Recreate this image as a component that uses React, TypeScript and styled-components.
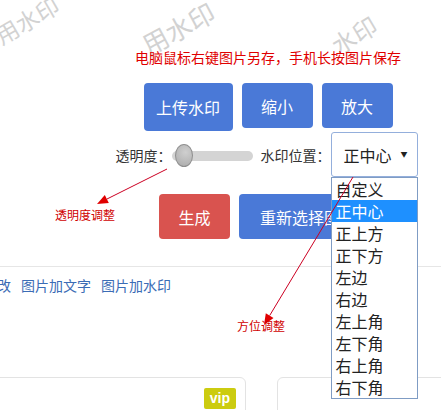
import React from 'react';
import styled, { createGlobalStyle } from 'styled-components';

const GlobalStyle = createGlobalStyle`
  html, body {
    margin: 0;
    padding: 0;
    background: #fff;
  }
  body {
    font-family: "Noto Sans CJK SC", "Noto Sans", sans-serif;
  }
`;

const Page = styled.div`
  position: relative;
  width: 441px;
  height: 410px;
  overflow: hidden;
  background: #fff;
`;

const Watermark = styled.span<{ $x: number; $y: number; $angle: number; $size: number }>`
  position: absolute;
  left: ${(p) => p.$x}px;
  top: ${(p) => p.$y}px;
  transform: translate(-50%, -50%) rotate(${(p) => p.$angle}deg);
  font-size: ${(p) => p.$size}px;
  font-weight: 400;
  color: #d2d2d2;
  white-space: nowrap;
  line-height: 1;
  user-select: none;
`;

const Tool = styled.div`
  position: relative;
  display: flex;
  flex-direction: column;
  align-items: center;
  padding: 49px 0 0 95px;
`;

const Tip = styled.p`
  margin: 0;
  font-size: 14px;
  line-height: 16px;
  color: #e00000;
  white-space: nowrap;
`;

const ButtonRow = styled.div<{ $top: number }>`
  display: flex;
  align-items: flex-start;
  gap: 9px;
  margin-top: ${(p) => p.$top}px;
`;

const Button = styled.button<{ $w: number; $h?: number; $danger?: boolean }>`
  width: ${(p) => p.$w}px;
  height: ${(p) => p.$h ?? 45}px;
  border: none;
  border-radius: 4px;
  background: ${(p) => (p.$danger ? '#d9534f' : '#4a79d7')};
  color: #fff;
  font-family: inherit;
  font-size: 16px;
  padding: 0;
  white-space: nowrap;
  cursor: pointer;
`;

const SettingRow = styled.div`
  display: flex;
  align-items: center;
  margin-top: 1px;
  margin-left: -3px;
`;

const Label = styled.span<{ $gap?: number }>`
  font-size: 14px;
  color: #333;
  white-space: nowrap;
  margin-left: ${(p) => p.$gap ?? 0}px;
`;

const Track = styled.div`
  position: relative;
  width: 81px;
  height: 10px;
  border-radius: 5px;
  background: #d4d4d4;
  margin-top: 2px;
`;

const Thumb = styled.div`
  position: absolute;
  left: 3px;
  top: -7px;
  width: 18px;
  height: 23px;
  border-radius: 50%;
  background: radial-gradient(circle at 60% 35%, #cfcfcf, #a9a9a9);
  border: 1px solid #8f8f8f;
  box-sizing: border-box;
`;

const SelectWrap = styled.div`
  position: relative;
`;

const SelectBox = styled.div`
  box-sizing: border-box;
  width: 87px;
  height: 45px;
  border: 1px solid #94afdc;
  border-radius: 3px;
  display: flex;
  align-items: center;
  justify-content: space-between;
  padding: 0 9px 0 12px;
  font-size: 16px;
  color: #222;
`;

const Caret = styled.span`
  font-size: 7px;
  color: #222;
  margin-top: -2px;
`;

const OptionList = styled.ul`
  position: absolute;
  top: 100%;
  left: 0;
  box-sizing: border-box;
  width: 87px;
  margin: 0;
  padding: 0;
  list-style: none;
  background: #fff;
  border: 1px solid #7f9cc4;
  z-index: 2;
`;

const Option = styled.li<{ $active?: boolean }>`
  height: 22px;
  line-height: 22px;
  padding-left: 4px;
  font-size: 16px;
  color: ${(p) => (p.$active ? '#fff' : '#222')};
  background: ${(p) => (p.$active ? '#1e90ff' : 'transparent')};
`;

const Divider = styled.div`
  height: 1px;
  background: #e6e6e6;
  margin-top: 27px;
`;

const Links = styled.nav`
  display: flex;
  gap: 10px;
  margin: 8px 0 0 -3px;
`;

const NavLink = styled.a`
  font-size: 14px;
  line-height: 20px;
  color: #3b6cb5;
  text-decoration: none;
  white-space: nowrap;
`;

const Cards = styled.div`
  display: flex;
  gap: 31px;
  margin: 82px 0 0 -20px;
`;

const Card = styled.div<{ $w: number }>`
  flex: none;
  box-sizing: border-box;
  width: ${(p) => p.$w}px;
  height: 60px;
  border: 1px solid #e3e3e3;
  border-radius: 6px;
  display: flex;
  justify-content: flex-end;
  align-items: flex-start;
  padding: 10px 9px;
`;

const Vip = styled.span`
  background: #cccc10;
  color: #fff;
  font-family: "Liberation Sans", Arial, sans-serif;
  font-weight: bold;
  font-size: 14px;
  line-height: 21px;
  padding: 0 6px;
  border-radius: 2px;
`;

const Annotations = styled.svg`
  position: absolute;
  left: 0;
  top: 0;
  pointer-events: none;
  z-index: 3;
`;

const Note = styled.span<{ $x: number; $y: number }>`
  position: absolute;
  left: ${(p) => p.$x}px;
  top: ${(p) => p.$y}px;
  font-size: 12px;
  line-height: 16px;
  color: #d00000;
  white-space: nowrap;
  z-index: 3;
`;

type Pt = [number, number];

const Arrow = ({ from, to }: { from: Pt; to: Pt }) => {
  const dx = to[0] - from[0];
  const dy = to[1] - from[1];
  const len = Math.hypot(dx, dy);
  const ux = dx / len;
  const uy = dy / len;
  const bx = to[0] - ux * 11;
  const by = to[1] - uy * 11;
  const px = -uy * 4.5;
  const py = ux * 4.5;
  return (
    <g>
      <line x1={from[0]} y1={from[1]} x2={bx} y2={by} stroke="#cc0022" strokeWidth={1} />
      <polygon
        points={`${to[0]},${to[1]} ${bx + px},${by + py} ${bx - px},${by - py}`}
        fill="#e00000"
      />
    </g>
  );
};

const positions = ['自定义', '正中心', '正上方', '正下方', '左边', '右边', '左上角', '左下角', '右上角', '右下角'];

const App: React.FC = () => {
  return (
    <Page>
      <GlobalStyle />
      <Watermark $x={27} $y={20} $angle={-30} $size={23}>用水印</Watermark>
      <Watermark $x={178} $y={28} $angle={-28} $size={26}>用水印</Watermark>
      <Watermark $x={354} $y={35} $angle={-31} $size={24}>水印</Watermark>

      <Tool>
        <Tip>电脑鼠标右键图片另存，手机长按图片保存</Tip>
        <ButtonRow $top={18}>
          <Button $w={89} $h={48}>上传水印</Button>
          <Button $w={71}>缩小</Button>
          <Button $w={71}>放大</Button>
        </ButtonRow>
        <SettingRow>
          <Label>透明度：</Label>
          <Track>
            <Thumb />
          </Track>
          <Label $gap={8}>水印位置：</Label>
          <SelectWrap>
            <SelectBox>
              正中心
              <Caret>▼</Caret>
            </SelectBox>
            <OptionList>
              {positions.map((p) => (
                <Option key={p} $active={p === '正中心'}>{p}</Option>
              ))}
            </OptionList>
          </SelectWrap>
        </SettingRow>
        <ButtonRow $top={17}>
          <Button $w={71} $danger>生成</Button>
          <Button $w={138}>重新选择图片</Button>
        </ButtonRow>
      </Tool>

      <Divider />
      <Links>
        <NavLink href="#">改</NavLink>
        <NavLink href="#">图片加文字</NavLink>
        <NavLink href="#">图片加水印</NavLink>
      </Links>

      <Cards>
        <Card $w={266}>
          <Vip>vip</Vip>
        </Card>
        <Card $w={200} />
      </Cards>

      <Annotations width={441} height={410}>
        <Arrow from={[167, 169]} to={[97, 204]} />
        <Arrow from={[353, 177]} to={[264, 325]} />
      </Annotations>
      <Note $x={55} $y={207}>透明度调整</Note>
      <Note $x={237} $y={318}>方位调整</Note>
    </Page>
  );
};

export default App;
